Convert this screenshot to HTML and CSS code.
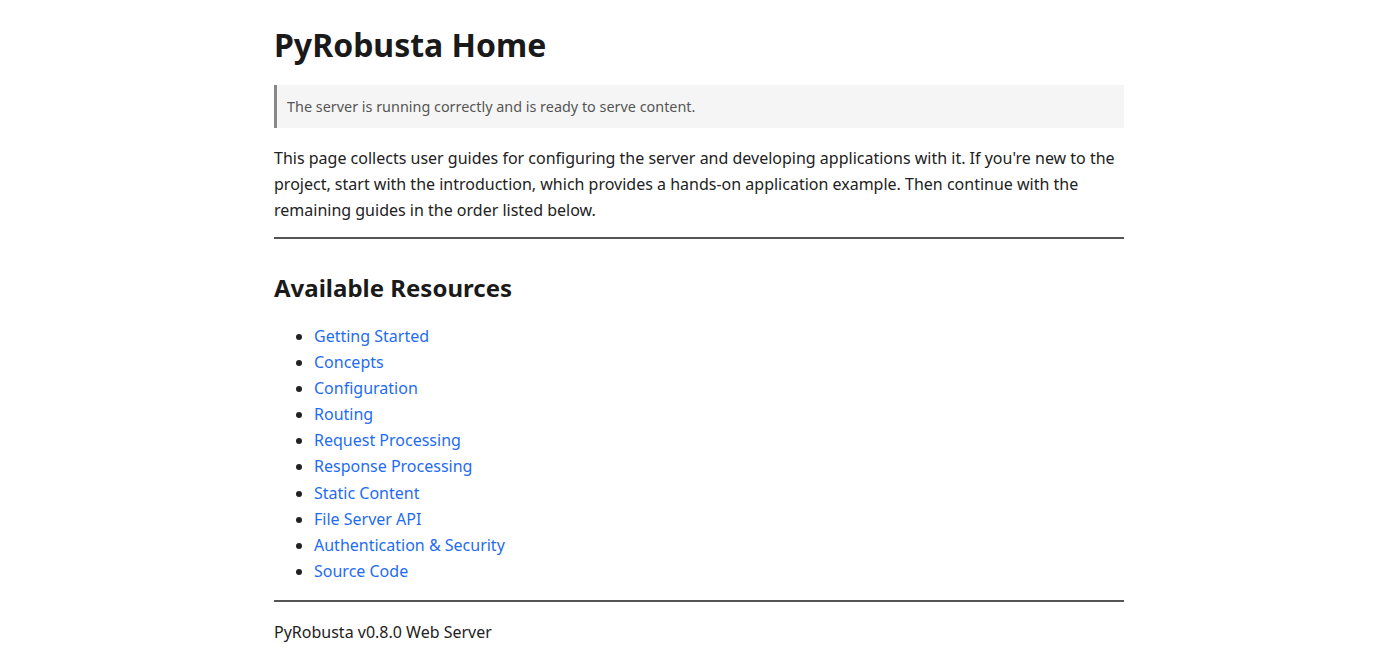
FILE: index.html
```html
<!DOCTYPE html>
<html lang="en">
<head>
    <meta charset="UTF-8">
    <meta name="viewport" content="width=device-width, initial-scale=1.0">
    <title>PyRobusta Home</title>
    <link rel="stylesheet" href="styles.css">
</head>
<body>
    <div class="page">
        <h1>PyRobusta Home</h1>
        <div class="status-note">The server is running correctly and is ready to serve content.</div>
        <p class="intro">This page collects user guides for configuring the server and developing applications with it. If you're new to the project, start with the introduction, which provides a hands-on application example. Then continue with the remaining guides in the order listed below.</p>
        <hr>

        <h2>Available Resources</h2>
        <ul class="guide-list">
            <li><a href="#">Getting Started</a></li>
            <li><a href="#">Concepts</a></li>
            <li><a href="#">Configuration</a></li>
            <li><a href="#">Routing</a></li>
            <li><a href="#">Request Processing</a></li>
            <li><a href="#">Response Processing</a></li>
            <li><a href="#">Static Content</a></li>
            <li><a href="#">File Server API</a></li>
            <li><a href="#">Authentication &amp; Security</a></li>
            <li><a href="#">Source Code</a></li>
        </ul>
        <hr>

        <p class="footer">PyRobusta v0.8.0 Web Server</p>
    </div>
</body>
</html>
```

FILE: styles.css
```css
body {
    font-family: "Noto Sans", "Open Sans", sans-serif;
    font-size: 16px;
    color: #222;
    background-color: #ffffff;
    margin: 0;
}
.page {
    max-width: 850px;
    margin: 0 auto;
    padding-top: 26px;
}
h1 {
    font-size: 32px;
    line-height: 38px;
    margin: 0 0 21px;
    color: #1a1a1a;
}
.status-note {
    background-color: #f5f5f5;
    border-left: 3px solid #888;
    padding: 10px 10px;
    font-size: 14.4px;
    line-height: 23px;
    color: #555;
    margin-bottom: 17px;
}
.intro {
    line-height: 26px;
    margin: 0 0 14px;
}
hr {
    border: 0;
    border-top: 2px solid #555;
    margin: 0;
}
h2 {
    font-size: 24px;
    line-height: 29px;
    margin: 34px 0 21px;
    color: #1a1a1a;
}
.guide-list {
    margin: 0 0 16px;
    padding-left: 40px;
}
.guide-list li {
    line-height: 26.1px;
}
.guide-list a {
    color: #1f6cf2;
    text-decoration: none;
}
.footer {
    margin: 17px 0 0;
    line-height: 26px;
}
```
